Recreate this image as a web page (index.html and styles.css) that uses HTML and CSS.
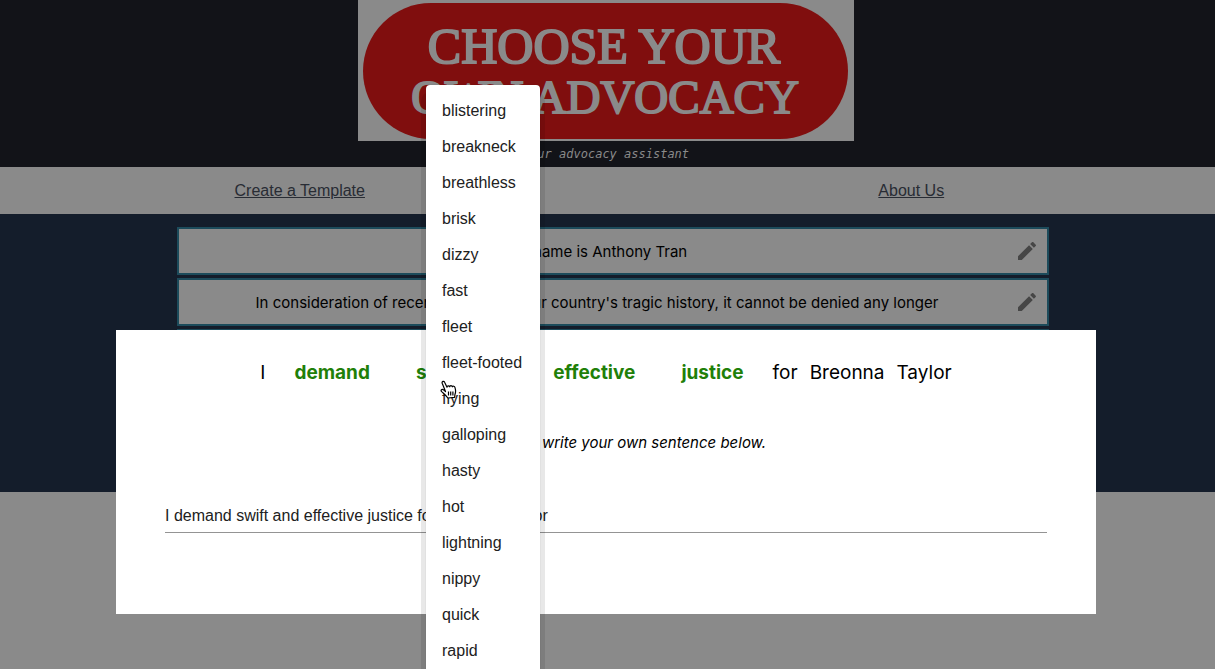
FILE: index.html
```html
<!DOCTYPE html>
<html lang="en">
<head>
<meta charset="utf-8">
<title>Choose Your Own Advocacy</title>
<link rel="stylesheet" href="styles.css">
</head>
<body>
<header class="banner">
  <svg class="logo" width="496" height="141" viewBox="0 0 496 141" role="img" aria-label="Choose Your Own Advocacy">
    <rect class="logo-back" width="496" height="141"/>
    <rect class="logo-pill" x="5" y="3" width="485" height="136" rx="68"/>
    <text class="logo-text logo-text-first" x="246" y="63">CHOOSE YOUR</text>
    <text class="logo-text logo-text-second" x="247" y="113">OWN ADVOCACY</text>
  </svg>
  <p class="tagline">Your advocacy assistant</p>
</header>
<nav class="nav">
  <a href="#create">Create a Template</a>
  <a href="#about">About Us</a>
</nav>
<main class="template">
  <div class="card"><p>My name is Anthony Tran</p><button class="edit" type="button" aria-label="Edit name"><svg width="24" height="24" viewBox="0 0 24 24"><path d="M3 17.25V21h3.75L17.81 9.94l-3.75-3.75L3 17.25zM20.71 7.04c.39-.39.39-1.02 0-1.41l-2.34-2.34c-.39-.39-1.02-.39-1.41 0l-1.83 1.83 3.75 3.75 1.83-1.83z"/></svg></button></div>
  <div class="card"><p>In consideration of recent events and our country's tragic history, it cannot be denied any longer</p><button class="edit" type="button" aria-label="Edit introduction"><svg width="24" height="24" viewBox="0 0 24 24"><path d="M3 17.25V21h3.75L17.81 9.94l-3.75-3.75L3 17.25zM20.71 7.04c.39-.39.39-1.02 0-1.41l-2.34-2.34c-.39-.39-1.02-.39-1.41 0l-1.83 1.83 3.75 3.75 1.83-1.83z"/></svg></button></div>
  <div class="card"></div>
  <div class="card"></div>
  <div class="card"></div>
</main>

<section class="dialog" role="dialog" aria-label="Edit sentence">
  <div class="sentence">
    <span>I</span>
    <button type="button">demand</button>
    <button type="button">swift</button>
    <span>and</span>
    <button type="button">effective</button>
    <button type="button">justice</button>
    <span>for</span>
    <span>Breonna</span>
    <span>Taylor</span>
  </div>
  <label class="hint" for="own">You can also write your own sentence below.</label>
  <input class="own" id="own" type="text" value="I demand swift and effective justice for Breonna Taylor">
</section>

<div class="menu" role="menu">
  <button type="button" role="menuitem">blistering</button>
  <button type="button" role="menuitem">breakneck</button>
  <button type="button" role="menuitem">breathless</button>
  <button type="button" role="menuitem">brisk</button>
  <button type="button" role="menuitem">dizzy</button>
  <button type="button" role="menuitem">fast</button>
  <button type="button" role="menuitem">fleet</button>
  <button type="button" role="menuitem">fleet-footed</button>
  <button type="button" role="menuitem">flying</button>
  <button type="button" role="menuitem">galloping</button>
  <button type="button" role="menuitem">hasty</button>
  <button type="button" role="menuitem">hot</button>
  <button type="button" role="menuitem">lightning</button>
  <button type="button" role="menuitem">nippy</button>
  <button type="button" role="menuitem">quick</button>
  <button type="button" role="menuitem">rapid</button>
</div>

<svg class="pointer" width="17" height="19" viewBox="0 0 17 19" aria-hidden="true">
  <path d="M5.5 11.5 2.2 3.2C1.6 1.3 3.9.6 4.6 2.2L7 7.2C7 5.6 9 5.2 9.7 6.8 9.9 5.4 11.8 5.2 12.4 6.8 12.9 5.8 14.6 6 15 7.6 15.7 10 16 12 15 14.2L14.6 17.4 7.8 18C6.6 15.6 3.8 13.6 1.6 11.6.4 10.2 1.6 8.8 3.2 9.6L5.5 11.5Z"/>
  <path d="M8.5 11.5v4M10.7 11.5v4M12.9 11.5v4"/>
</svg>
</body>
</html>
```

FILE: styles.css
```css
* {
  box-sizing: border-box;
}

body {
  margin: 0;
  min-height: 100vh;
  overflow: hidden;
  background: #8a8a8a;
  color: #000;
  font-family: "Liberation Sans", Arial, sans-serif;
  font-size: 16px;
}

p {
  margin: 0;
}

button {
  border: 0;
  padding: 0;
  background: none;
  font: inherit;
  color: inherit;
  cursor: pointer;
}

.banner {
  display: flex;
  flex-direction: column;
  align-items: center;
  padding-right: 3px;
  background: #121318;
}

.logo {
  display: block;
}

.logo-back {
  fill: #8a8a8a;
}

.logo-pill {
  fill: #800e0e;
}

.logo-text {
  fill: #8a8a8a;
  stroke: #8a8a8a;
  stroke-width: 2px;
  font-family: "Liberation Serif", serif;
  text-anchor: middle;
}

.logo-text-first {
  font-size: 50px;
}

.logo-text-second {
  font-size: 47px;
}

.tagline {
  font: italic 12px/26px "DejaVu Sans Mono", monospace;
  color: #8a8a8a;
}

.nav {
  display: grid;
  grid-template-columns: 1fr 1fr;
  column-gap: 12px;
  justify-items: center;
  align-items: center;
  height: 47px;
  padding-right: 4px;
}

.nav a {
  color: #282c34;
}

.template {
  display: flex;
  flex-direction: column;
  gap: 3px;
  padding: 13px 166px 13px 177px;
  background: #141d2b;
}

.card {
  display: flex;
  align-items: center;
  min-height: 48px;
  padding-right: 8px;
  border: 2px solid #1c4b5b;
  background: #8a8a8a;
}

.card p {
  flex: 1;
  text-align: center;
  font-family: Inter, sans-serif;
  font-size: 15px;
}

.edit {
  display: flex;
}

.edit svg {
  fill: #464646;
}

.dialog {
  position: absolute;
  top: 330px;
  left: 116px;
  right: 119px;
  display: flex;
  flex-direction: column;
  align-items: center;
  padding: 29px 49px 81px;
  background: #fff;
}

.sentence {
  display: flex;
  justify-content: center;
  margin-bottom: 46px;
  font: 19px/28px Inter, sans-serif;
}

.sentence span {
  padding: 0 6px;
}

.sentence button {
  padding: 0 23px;
  color: #1f8009;
  font-weight: 700;
}

.hint {
  margin-bottom: 46px;
  font: italic 15px/20px Inter, sans-serif;
}

.own {
  width: 100%;
  height: 34px;
  padding: 0;
  border: 0;
  border-bottom: 1px solid #949494;
  background: transparent;
  color: #212121;
  font: 16px "Liberation Sans", Arial, sans-serif;
  outline: 0;
}

.menu {
  position: absolute;
  top: 85px;
  left: 426px;
  display: flex;
  flex-direction: column;
  width: 114px;
  padding-top: 8px;
  border-radius: 4px 4px 0 0;
  background: #fff;
  box-shadow: 0 0 1px rgba(0, 0, 0, 0.3), 0 12px 0 5px rgba(0, 0, 0, 0.09);
}

.menu button {
  padding: 0 16px;
  color: #212121;
  line-height: 36px;
  text-align: left;
}

.pointer {
  position: absolute;
  top: 380px;
  left: 440px;
  fill: #fff;
  stroke: #000;
  stroke-width: 1.2px;
  stroke-linejoin: round;
}
```
